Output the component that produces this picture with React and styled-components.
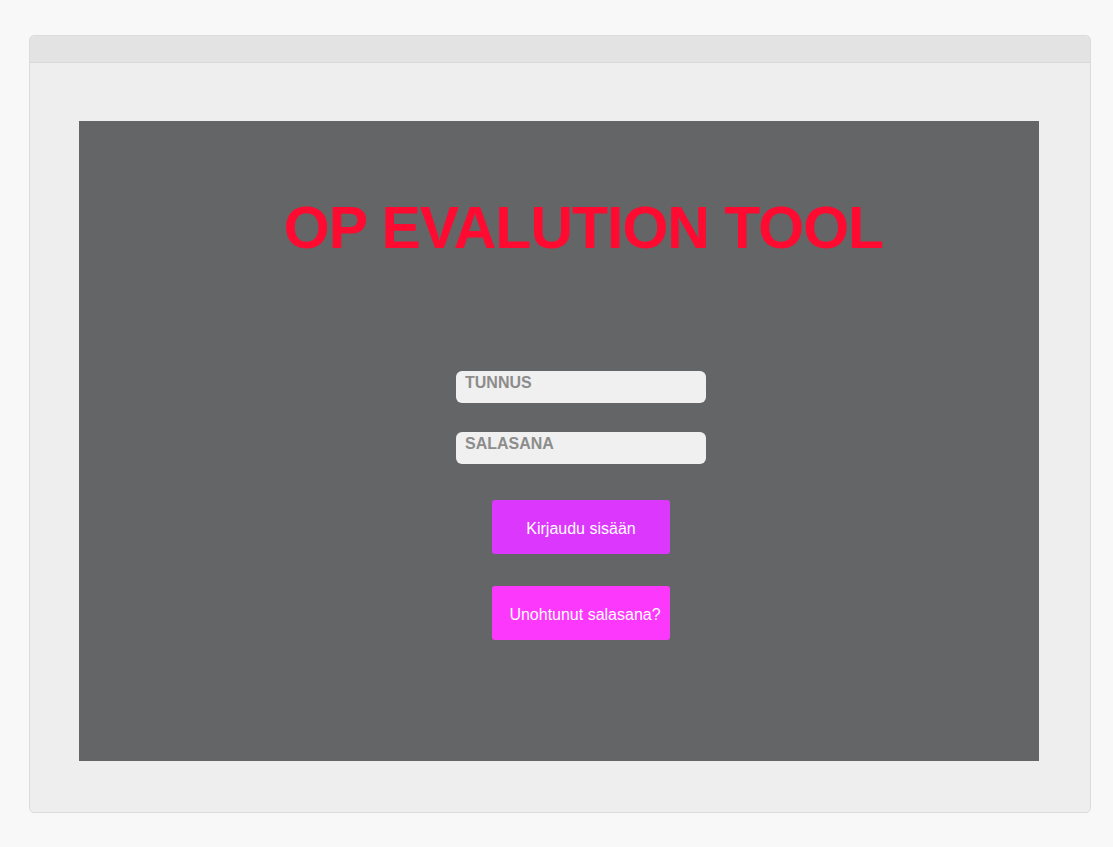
import React from "react"
import styled, { createGlobalStyle } from "styled-components"

const Global = createGlobalStyle`
  html, body {
    margin: 0;
    background: #f8f8f8;
    font-family: "Liberation Sans", Arial, sans-serif;
  }
`

export default function App() {
  return (
    <Page>
      <Global />
      <Window>
        <TitleBar />
        <Body>
          <Panel>
            <Title>OP EVALUTION TOOL</Title>
            <Form>
              <Field placeholder="TUNNUS" />
              <Field placeholder="SALASANA" type="password" />
              <Button>Kirjaudu sisään</Button>
              <Button $pink $shift>Unohtunut salasana?</Button>
            </Form>
          </Panel>
        </Body>
      </Window>
    </Page>
  )
}

const Page = styled.div`
  padding: 35px 22px 34px 29px;
`

const Window = styled.div`
  width: 1060px;
  border: 1px solid #dcdcdc;
  border-radius: 5px;
  background: #eeeeee;
  overflow: hidden;
`

const TitleBar = styled.div`
  height: 26px;
  background: #e3e3e3;
  border-bottom: 1px solid #d9d9d9;
`

const Body = styled.div`
  padding: 58px 50px 51px 49px;
`

const Panel = styled.div`
  width: 960px;
  height: 640px;
  background: #646566;
  box-sizing: border-box;
  padding: 72px 0 0 49px;
  display: flex;
  flex-direction: column;
  align-items: center;
`

const Title = styled.h1`
  margin: 0;
  color: #ff0a30;
  font-size: 59px;
  letter-spacing: -1px;
  font-weight: bold;
  line-height: 70px;
`

const Form = styled.div`
  margin-top: 108px;
  margin-left: -5px;
  display: flex;
  flex-direction: column;
  align-items: center;
`

const Field = styled.input`
  width: 250px;
  height: 32px;
  box-sizing: border-box;
  border: none;
  border-radius: 6px;
  background: #f0f0f0;
  padding: 0 9px 8px;
  margin-bottom: 29px;
  font-family: "Liberation Sans", Arial, sans-serif;
  font-size: 16px;
  font-weight: bold;
  outline: none;
  &::placeholder {
    color: #8c8c8c;
  }
`

const Button = styled.button`
  width: 178px;
  height: 54px;
  border: none;
  border-radius: 3px;
  background: ${(p) => (p.$pink ? "#fd38fd" : "#dc37fd")};
  color: #fff;
  font-family: "Liberation Sans", Arial, sans-serif;
  font-size: 16px;
  padding: ${(p) => (p.$shift ? "3px 0 0 8px" : "3px 0 0")};
  white-space: nowrap;
  margin-top: ${(p) => (p.$shift ? "32px" : "7px")};
`
